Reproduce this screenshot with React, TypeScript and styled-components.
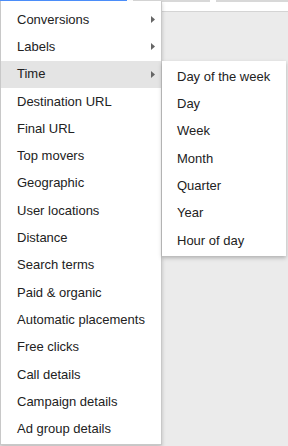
import React from "react";
import styled, { createGlobalStyle } from "styled-components";

const GlobalStyle = createGlobalStyle`
  html, body {
    margin: 0;
    padding: 0;
  }
  body {
    font-family: Arial, "Liberation Sans", sans-serif;
    background: #ebebeb;
  }
`;

type MenuItemData = {
  label: string;
  sub?: string[];
  active?: boolean;
};

const items: MenuItemData[] = [
  { label: "Conversions", sub: [] },
  { label: "Labels", sub: [] },
  {
    label: "Time",
    active: true,
    sub: ["Day of the week", "Day", "Week", "Month", "Quarter", "Year", "Hour of day"],
  },
  { label: "Destination URL" },
  { label: "Final URL" },
  { label: "Top movers" },
  { label: "Geographic" },
  { label: "User locations" },
  { label: "Distance" },
  { label: "Search terms" },
  { label: "Paid & organic" },
  { label: "Automatic placements" },
  { label: "Free clicks" },
  { label: "Call details" },
  { label: "Campaign details" },
  { label: "Ad group details" },
];

// 화살표 아이콘
const Arrow = () => (
  <ArrowIcon width="4" height="7" viewBox="0 0 4 7">
    <path d="M0 0 L4 3.5 L0 7 Z" fill="#666" />
  </ArrowIcon>
);

const App = () => {
  return (
    <Page>
      <GlobalStyle />
      <TopStrip>
        <TabLine $color="#4d90fe" $width={127} />
        <TabGap $width={6} />
        <TabLine $color="#d8d8d8" $width={77} />
        <TabGap $width={6} />
        <TabLine $color="#d8d8d8" $width={72} />
      </TopStrip>
      <Content />
      <Menu>
        {items.map((item) => (
          <Item key={item.label} $active={item.active}>
            <ItemLabel>{item.label}</ItemLabel>
            {item.sub && <Arrow />}
            {item.sub && item.sub.length > 0 && (
              <SubMenu>
                {item.sub.map((s) => (
                  <SubItem key={s}>{s}</SubItem>
                ))}
              </SubMenu>
            )}
          </Item>
        ))}
      </Menu>
    </Page>
  );
};

export default App;

const Page = styled.div`
  position: relative;
  width: 288px;
  height: 446px;
  overflow: hidden;
  display: flex;
  flex-direction: column;
`;

const TopStrip = styled.div`
  height: 11px;
  flex: none;
  background: #fff;
  border-bottom: 1px solid #d4d4d4;
  display: flex;
  align-items: flex-start;
`;

const TabLine = styled.div<{ $color: string; $width: number }>`
  width: ${(p) => p.$width}px;
  height: 2px;
  background: ${(p) => p.$color};
  flex: none;
`;

const TabGap = styled.div<{ $width: number }>`
  width: ${(p) => p.$width}px;
  flex: none;
`;

const Content = styled.div`
  flex: 1;
  background: #ebebeb;
`;

const Menu = styled.ul`
  position: absolute;
  top: 1px;
  left: 0;
  width: 160px;
  margin: 0;
  padding: 5px 0 1px;
  list-style: none;
  background: #fff;
  border: 1px solid #c8c8c8;
  border-top: none;
  box-shadow: 0 2px 4px rgba(0, 0, 0, 0.2);
`;

const Item = styled.li<{ $active?: boolean }>`
  position: relative;
  height: 27.3px;
  display: flex;
  align-items: center;
  justify-content: space-between;
  padding: 0 6px 0 16px;
  background: ${(p) => (p.$active ? "#e4e4e4" : "transparent")};
  color: #222;
  font-size: 13px;
  white-space: nowrap;
`;

const ItemLabel = styled.span`
  line-height: 16px;
`;

const ArrowIcon = styled.svg`
  flex: none;
  display: block;
`;

const SubMenu = styled.ul`
  position: absolute;
  top: 0;
  left: 161px;
  width: 124px;
  margin: 0;
  padding: 2px 0 2px;
  list-style: none;
  background: #fff;
  box-shadow: 0 2px 4px rgba(0, 0, 0, 0.25);
  z-index: 2;
`;

const SubItem = styled.li`
  height: 27.3px;
  display: flex;
  align-items: center;
  padding: 0 0 0 15px;
  color: #222;
  font-size: 13px;
  white-space: nowrap;
`;
